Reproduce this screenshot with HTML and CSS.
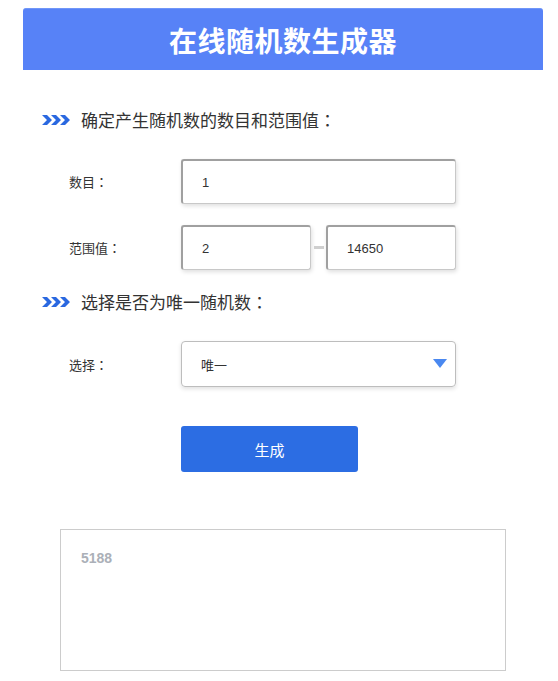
FILE: index.html
```html
<!DOCTYPE html>
<html lang="zh-CN">
<head>
<meta charset="utf-8">
<title>在线随机数生成器</title>
<link rel="stylesheet" href="styles.css">
</head>
<body>
<header class="top"><h1 class="top-title">在线随机数生成器</h1></header>

<h2 class="sec-title sec-title--first">
  <svg class="chev" width="28" height="10" viewBox="0 0 28 10"><path d="M0 0h5l5 5-5 5H0l5-5zM9 0h5l5 5-5 5H9l5-5zM18 0h5l5 5-5 5h-5l5-5z" fill="#2a68e0"/></svg>
  <span>确定产生随机数的数目和范围值<span class="colon" lang="zh-TW">：</span></span>
</h2>

<div class="row row--first">
  <label class="row-label">数目<span class="colon" lang="zh-TW">：</span></label>
  <input class="inp inp--wide" type="text" value="1" readonly>
</div>
<div class="row row--second">
  <label class="row-label">范围值<span class="colon" lang="zh-TW">：</span></label>
  <div class="range">
    <input class="inp inp--half" type="text" value="2" readonly>
    <span class="dash"></span>
    <input class="inp inp--half" type="text" value="14650" readonly>
  </div>
</div>

<h2 class="sec-title sec-title--second">
  <svg class="chev" width="28" height="10" viewBox="0 0 28 10"><path d="M0 0h5l5 5-5 5H0l5-5zM9 0h5l5 5-5 5H9l5-5zM18 0h5l5 5-5 5h-5l5-5z" fill="#2a68e0"/></svg>
  <span>选择是否为唯一随机数<span class="colon" lang="zh-TW">：</span></span>
</h2>

<div class="row row--select">
  <label class="row-label">选择<span class="colon" lang="zh-TW">：</span></label>
  <div class="select">
    <span>唯一</span>
    <svg class="caret" width="14" height="9" viewBox="0 0 14 9"><path d="M0 0h14L7 9z" fill="#4a88f0"/></svg>
  </div>
</div>

<div class="btn-row"><button class="btn" type="button">生成</button></div>

<div class="result">5188</div>
</body>
</html>
```

FILE: styles.css
```css
* { box-sizing: border-box; }
body {
  margin: 0;
  background: #fff;
  font-family: "Noto Sans CJK SC", "Noto Sans", sans-serif;
  color: #333;
}
.top {
  margin: 8px 0 0 23px;
  width: 520px;
  height: 62px;
  background: #5782f7;
  border-top: 1px solid #7096f8;
  border-radius: 3px 3px 0 0;
  display: flex;
  align-items: center;
  justify-content: center;
}
.top-title {
  margin: 0;
  color: #fff;
  font-size: 28px;
  font-weight: 700;
  line-height: 1;
  letter-spacing: 0.5px;
}
.colon {
  font-family: "Noto Sans CJK TC", "Noto Sans CJK SC", sans-serif;
}
.sec-title {
  margin: 0;
  padding-left: 42px;
  display: flex;
  align-items: center;
  gap: 11px;
  font-size: 17px;
  font-weight: 400;
  line-height: 24px;
  color: #333;
}
.sec-title--first { margin-top: 38px; }
.sec-title--second { margin-top: 20px; }
.chev { flex: none; }
.row {
  display: flex;
  align-items: center;
  padding-left: 69px;
}
.row--first { margin-top: 27px; }
.row--second { margin-top: 21px; }
.row--select { margin-top: 27px; }
.row-label {
  width: 112px;
  font-size: 13px;
  color: #333;
}
.inp {
  height: 45px;
  border: 1px solid #c8c8c8;
  border-top: 2px solid #a0a0a0;
  border-left: 2px solid #a0a0a0;
  border-radius: 3px;
  padding: 0 0 0 19px;
  font-family: "Liberation Sans", Arial, sans-serif;
  font-size: 13px;
  color: #333;
  background: #fff;
  box-shadow: 1px 2px 4px rgba(0, 0, 0, 0.13);
  outline: none;
}
.inp--wide { width: 275px; }
.inp--half { width: 130px; }
.range {
  display: flex;
  align-items: center;
}
.dash {
  width: 10px;
  height: 3px;
  margin: 0 2px 0 3px;
  background: #cfcfcf;
}
.select {
  width: 275px;
  height: 46px;
  border: 1px solid #bdbdbd;
  border-radius: 4px;
  box-shadow: 0 2px 4px rgba(0, 0, 0, 0.12);
  display: flex;
  align-items: center;
  justify-content: space-between;
  padding: 0 8px 0 19px;
  font-size: 13px;
  color: #333;
}
.caret { flex: none; margin-top: -2px; }
.btn-row {
  margin-top: 39px;
  padding-left: 181px;
}
.btn {
  width: 177px;
  height: 46px;
  border: none;
  border-radius: 3px;
  background: #2c6de3;
  color: #fff;
  font-family: "Noto Sans CJK SC", sans-serif;
  font-size: 15px;
  padding: 0;
}
.result {
  margin: 57px 0 0 60px;
  width: 446px;
  height: 142px;
  border: 1px solid #cccccc;
  padding: 20px 0 0 20px;
  font-family: "Liberation Sans", Arial, sans-serif;
  font-weight: 700;
  font-size: 14px;
  color: #abb0b8;
}
```
